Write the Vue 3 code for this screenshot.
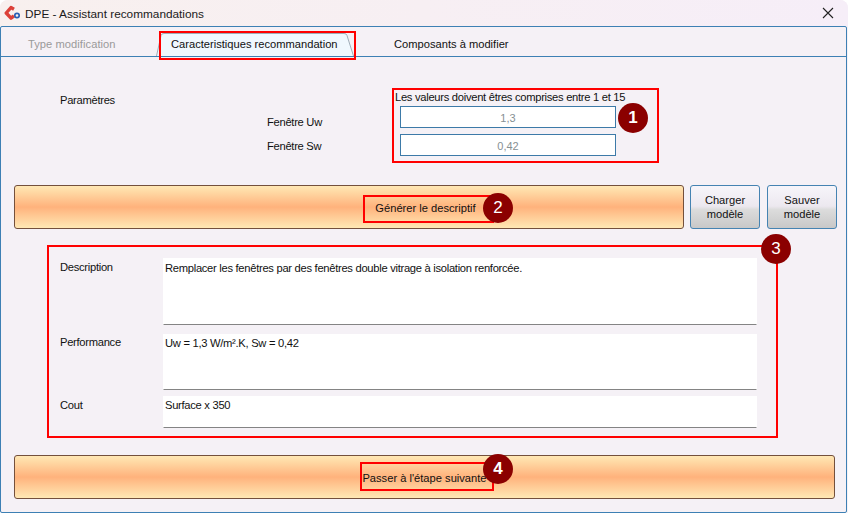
<script setup>
const fields = [
  { label: 'Description', text: 'Remplacer les fenêtres par des fenêtres double vitrage à isolation renforcée.', cls: 'f-desc' },
  { label: 'Performance', text: 'Uw = 1,3 W/m².K, Sw = 0,42', cls: 'f-perf' },
  { label: 'Cout', text: 'Surface x 350', cls: 'f-cout' },
]
const marks = [
  { n: 1, x: 633, y: 118, bold: true },
  { n: 2, x: 498, y: 208, bold: false },
  { n: 3, x: 776, y: 249, bold: false },
  { n: 4, x: 498, y: 469, bold: true },
]
const boxes = [
  { x: 159, y: 31, w: 197, h: 29 },
  { x: 392, y: 88, w: 267, h: 75 },
  { x: 363, y: 195, w: 131, h: 28 },
  { x: 47, y: 245, w: 731, h: 193 },
  { x: 360, y: 462, w: 134, h: 29 },
]
</script>

<template>
  <div class="window">
    <header class="titlebar">
      <svg class="logo" width="17" height="16" viewBox="0 0 17 16">
        <path d="M10 4.2 L7 2.5 L2.2 8 L7 13.2 L10 10.8" fill="none" stroke="#dc4139" stroke-width="3.4" stroke-linejoin="round" />
        <circle cx="13" cy="10.5" r="2.2" fill="none" stroke="#2a5fb4" stroke-width="1.7" />
      </svg>
      <span class="title">DPE - Assistant recommandations</span>
      <svg class="close" width="12" height="12" viewBox="0 0 12 12">
        <path d="M1 1 L11 11 M11 1 L1 11" stroke="#222" stroke-width="1.1" />
      </svg>
    </header>

    <main class="frame">
      <nav class="tabs">
        <span class="tab muted">Type modification</span>
        <span class="tab active">
          <svg class="tab-shape" width="200" height="24" viewBox="0 0 200 24">
            <path d="M0.5 24 L5 3.5 Q5.5 1.5 8 1.5 L188 1.5 Q190.5 1.5 191 3.5 L197.5 24 Z" fill="#f0f8fe" stroke="none" />
            <path d="M0.5 24 L5 3.5 Q5.5 1.5 8 1.5 L188 1.5 Q190.5 1.5 191 3.5 L197.5 24" fill="none" stroke="#9fadb8" />
          </svg>
          <span class="tab-text">Caracteristiques recommandation</span>
        </span>
        <span class="tab last">Composants à modifier</span>
      </nav>

      <section class="params">
        <div class="p-title">Paramètres</div>
        <div class="p-labels">
          <span>Fenêtre Uw</span>
          <span>Fenêtre Sw</span>
        </div>
        <div class="p-values">
          <div class="hint">Les valeurs doivent êtres comprises entre 1 et 15</div>
          <div class="input">1,3</div>
          <div class="input">0,42</div>
        </div>
      </section>

      <section class="actions">
        <button class="btn orange grow">Générer le descriptif</button>
        <button class="btn grey">Charger<br />modèle</button>
        <button class="btn grey">Sauver<br />modèle</button>
      </section>

      <section class="fields">
        <div v-for="f in fields" :key="f.label" class="field" :class="f.cls">
          <label>{{ f.label }}</label>
          <div class="area">{{ f.text }}</div>
        </div>
      </section>

      <section class="next">
        <button class="btn orange full">Passer à l'étape suivante</button>
      </section>
    </main>

    <div
      v-for="(b, i) in boxes"
      :key="i"
      class="redbox"
      :style="{ left: b.x + 'px', top: b.y + 'px', width: b.w + 'px', height: b.h + 'px' }"
    ></div>
    <div
      v-for="m in marks"
      :key="m.n"
      class="mark"
      :class="{ strong: m.bold }"
      :style="{ left: m.x - 15 + 'px', top: m.y - 15 + 'px' }"
    >{{ m.n }}</div>
  </div>
</template>

<style>
html, body { margin: 0; background: #fff; }
</style>

<style scoped>
.window {
  position: relative;
  width: 848px;
  height: 513px;
  box-sizing: border-box;
  overflow: hidden;
  background: #f5f1f6;
  font-family: "Liberation Sans", Arial, sans-serif;
  font-size: 11.2px;
  letter-spacing: -0.29px;
  color: #111;
  border-radius: 8px 8px 0 0;
}
.titlebar {
  display: flex;
  align-items: center;
  height: 26px;
  padding: 0 14px 0 4px;
  background: linear-gradient(90deg, #f8f0ee, #f6eef8);
  box-sizing: border-box;
}
.logo { margin-right: 4px; flex: none; }
.title { font-size: 11.8px; letter-spacing: 0; color: #1a1a1a; padding-top: 1px; }
.close { margin-left: auto; }
.frame {
  box-sizing: border-box;
  height: 487px;
  margin-right: 1px;
  border: 1px solid #3d80b4;
  border-radius: 2px;
  background: #f5f1f6;
}
.tabs {
  display: flex;
  align-items: flex-end;
  height: 29px;
  font-size: 11.15px;
  letter-spacing: 0;
  border-bottom: 1px solid #3d80b4;
}
.tab { display: block; line-height: 24px; height: 24px; white-space: nowrap; }
.muted { margin-left: 27px; color: #9a9a9a; width: 128px; letter-spacing: 0.05px; }
.active {
  position: relative;
  width: 198px;
}
.tab-shape { position: absolute; left: 0; top: 0; }
.tab-text { position: relative; margin-left: 15px; }
.last { margin-left: 40px; }
.params {
  display: grid;
  grid-template-columns: 207px 133px auto;
  padding: 32px 0 0 59px;
  height: 128px;
  box-sizing: border-box;
}
.p-title { padding-top: 4px; line-height: 14px; }
.p-labels {
  display: flex;
  flex-direction: column;
  gap: 10px;
  padding-top: 26px;
}
.p-labels span { line-height: 14px; }
.p-values { display: flex; flex-direction: column; }
.hint { line-height: 14px; margin: 1px 0 2px -5px; white-space: nowrap; }
.input {
  box-sizing: border-box;
  width: 216px;
  height: 22px;
  padding-top: 1px;
  line-height: 20px;
  margin-bottom: 6px;
  border: 1px solid #3d7aa8;
  background: #fff;
  color: #879093;
  font-size: 11px;
  letter-spacing: 0;
  text-align: center;
}
.actions {
  display: flex;
  gap: 6px;
  margin: 0 9px 0 13px;
  height: 44px;
}
.actions .grey + .grey { margin-left: 1px; }
.btn {
  font: inherit;
  font-size: 11.15px;
  letter-spacing: 0;
  color: #111;
  box-sizing: border-box;
  padding: 0;
  border-radius: 3px;
  line-height: 14px;
}
.orange {
  border: 1px solid #74503c;
  background: linear-gradient(#ffe8b4, #ffb27c 50%, #ffe8b4);
}
.grow { flex: 1; padding-left: 153px; padding-top: 1px; }
.full { width: 100%; height: 44px; padding-top: 1px; }
.grey {
  width: 70px;
  flex: none;
  border: 1px solid #4583b2;
  background: linear-gradient(#f7f5fa, #ece8ef 48%, #dcdcdc 56%, #c8c8c8);
}
.fields {
  display: flex;
  flex-direction: column;
  margin-top: 29px;
  padding-left: 59px;
}
.field { display: grid; grid-template-columns: 103px 594px; }
.field label { line-height: 14px; padding-top: 2px; }
.area {
  box-sizing: border-box;
  padding: 1px;
  line-height: 14px;
  background: #fff;
  border: 1px solid #fff;
  border-bottom: 1px solid #848484;
}
.f-desc .area { height: 67px; padding-top: 2px; }
.f-perf { margin-top: 9px; }
.f-perf .area { height: 56px; }
.f-perf label { padding-top: 1px; }
.f-cout { margin-top: 6px; }
.f-cout .area { height: 32px; }
.next { margin: 27px 11px 0 13px; }
.redbox {
  position: absolute;
  box-sizing: border-box;
  border: 2px solid #f00;
  pointer-events: none;
}
.mark {
  position: absolute;
  width: 30px;
  height: 30px;
  border-radius: 50%;
  background: #8b0000;
  color: #fff;
  font-size: 17px;
  letter-spacing: 0;
  line-height: 30px;
  text-align: center;
}
.strong { font-weight: bold; }
</style>
